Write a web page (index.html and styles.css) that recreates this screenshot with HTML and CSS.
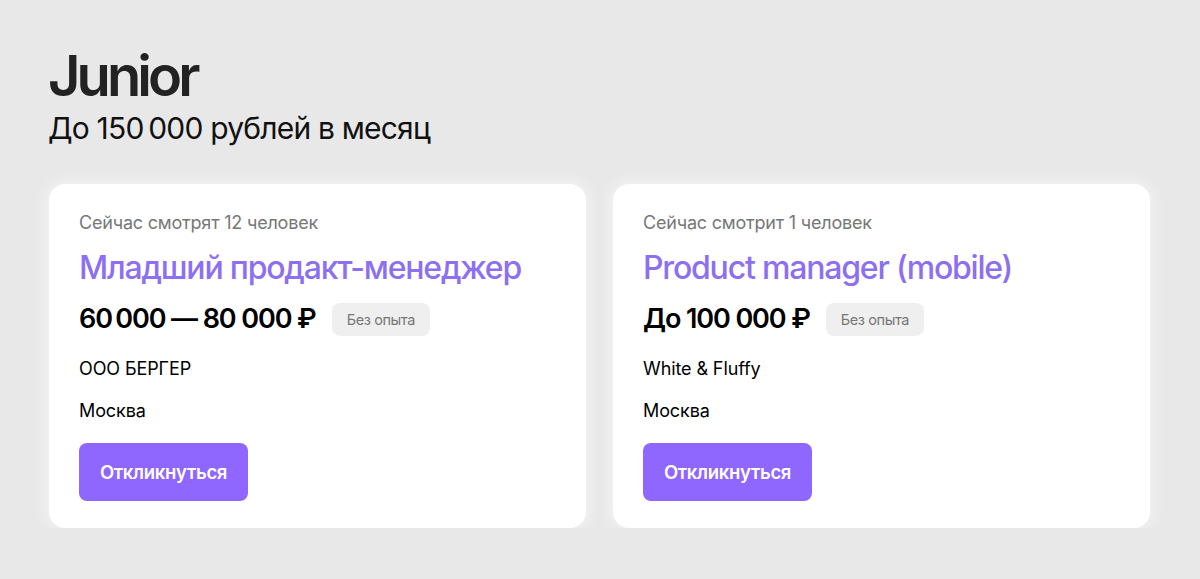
FILE: index.html
```html
<!DOCTYPE html>
<html lang="ru">
<head>
<meta charset="utf-8">
<link rel="stylesheet" href="styles.css">
</head>
<body>
<main class="page">
  <header class="head">
    <h1 class="title">Junior</h1>
    <p class="subtitle">До 150&#8201;000 рублей в месяц</p>
  </header>
  <section class="cards">
    <article class="card">
      <p class="watch">Сейчас смотрят 12 человек</p>
      <h2 class="job">Младший продакт-менеджер</h2>
      <div class="salary-row">
        <span class="salary">60&#8201;000 — 80 000 ₽</span>
        <span class="badge">Без опыта</span>
      </div>
      <p class="info">ООО БЕРГЕР</p>
      <p class="info">Москва</p>
      <button class="btn">Откликнуться</button>
    </article>
    <article class="card">
      <p class="watch">Сейчас смотрит 1 человек</p>
      <h2 class="job">Product manager (mobile)</h2>
      <div class="salary-row">
        <span class="salary">До 100 000 ₽</span>
        <span class="badge">Без опыта</span>
      </div>
      <p class="info">White &amp; Fluffy</p>
      <p class="info">Москва</p>
      <button class="btn">Откликнуться</button>
    </article>
  </section>
</main>
</body>
</html>
```
FILE: styles.css
```css
* { box-sizing: border-box; }
html, body {
  margin: 0;
  padding: 0;
  background: #e8e8e8;
  font-family: Inter, "Noto Sans", sans-serif;
  color: #000;
}
.page {
  padding: 44px 50px 0 48px;
}
.head { margin-bottom: 38px; }
.title {
  margin: 0;
  font-size: 56px;
  line-height: 64px;
  font-weight: 600;
  letter-spacing: -3.9px;
  color: #222;
}
.subtitle {
  margin: 2px 0 0;
  font-size: 30px;
  line-height: 36px;
  font-weight: 400;
  letter-spacing: -0.8px;
  color: #111;
}
.cards {
  display: grid;
  grid-template-columns: 537px 537px;
  gap: 27px;
  margin-left: 1px;
}
.card {
  background: #fff;
  border-radius: 16px;
  height: 344px;
  padding: 27px 30px 0 30px;
  box-shadow: 0 0 14px 4px rgba(255,255,255,0.45);
}
.watch {
  margin: 0;
  font-size: 18px;
  line-height: 24px;
  color: #777;
  letter-spacing: -0.2px;
}
.job {
  margin: 13px 0 0;
  font-size: 32px;
  line-height: 40px;
  font-weight: 500;
  color: #8d6ff2;
  letter-spacing: -1.2px;
}
.salary-row {
  display: flex;
  align-items: center;
  gap: 16px;
  margin-top: 14px;
  height: 34px;
}
.salary {
  font-size: 27px;
  font-weight: 600;
  letter-spacing: -1.1px;
  line-height: 34px;
}
.badge {
  display: inline-flex;
  align-items: center;
  height: 33px;
  padding: 0 15px;
  background: #efefef;
  border-radius: 8px;
  font-size: 14.5px;
  color: #777;
  letter-spacing: -0.4px;
}
.info {
  margin: 21px 0 0;
  font-size: 18px;
  line-height: 24px;
  letter-spacing: -0.1px;
}
.info + .info { margin-top: 18px; }
.btn {
  margin-top: 20px;
  width: 169px;
  height: 58px;
  border: 0;
  border-radius: 8px;
  background: #8f66fe;
  color: #fff;
  font-family: Inter, "Noto Sans", sans-serif;
  font-size: 18.5px;
  font-weight: 600;
  letter-spacing: -0.3px;
  cursor: pointer;
}
```
